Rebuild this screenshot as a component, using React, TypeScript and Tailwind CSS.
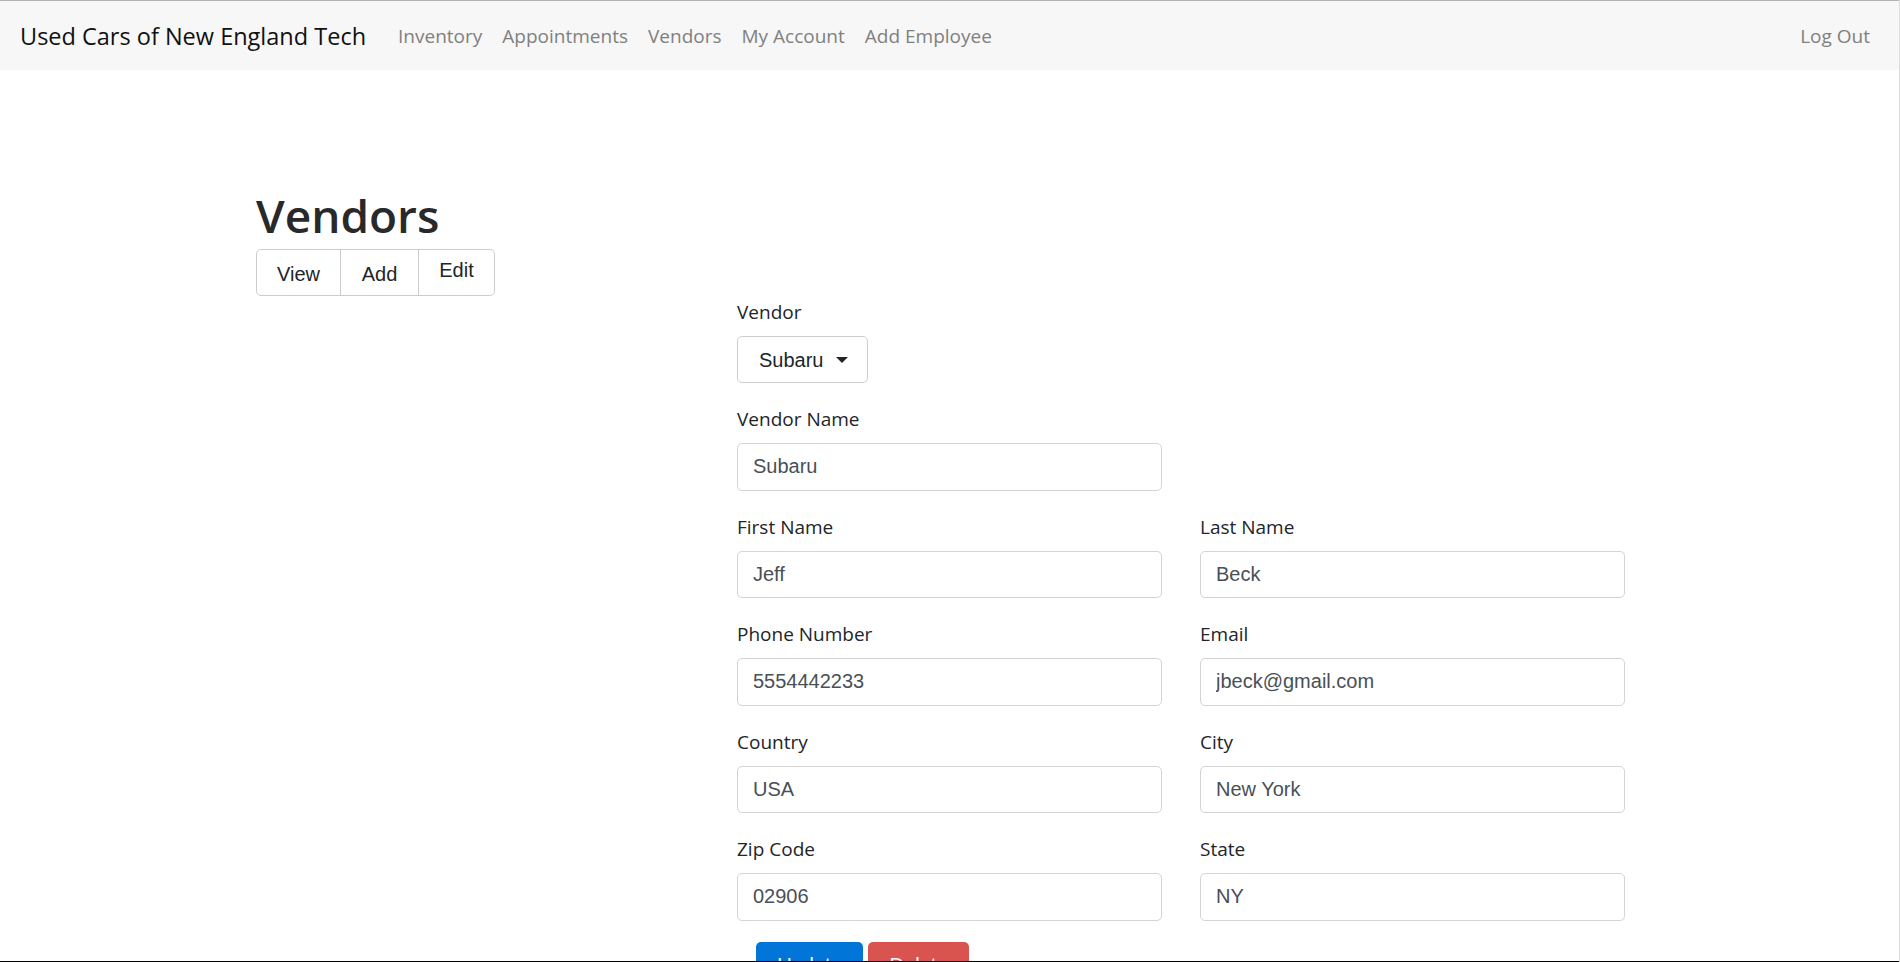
import React from "react"

const navLinks = ["Inventory", "Appointments", "Vendors", "My Account", "Add Employee"]

const fields: [string, string][] = [
  ["First Name", "Jeff"],
  ["Last Name", "Beck"],
  ["Phone Number", "5554442233"],
  ["Email", "jbeck@gmail.com"],
  ["Country", "USA"],
  ["City", "New York"],
  ["Zip Code", "02906"],
  ["State", "NY"],
]

const uiFont = { fontFamily: '"Open Sans", "Noto Sans", sans-serif' }
const arial = { fontFamily: '"Liberation Sans", Arial, sans-serif' }

function Field({ label, value }: { label: string; value: string }) {
  return (
    <div className="mb-[20px]">
      <label className="block text-[19px] leading-[30px] pt-[1px] h-[30px] text-[#212529] mb-[10px]" style={uiFont}>
        {label}
      </label>
      <input
        readOnly
        value={value}
        className="block w-full h-[47.5px] px-[15px] text-[20px] text-[#495057] border border-[#d4d4d4] rounded-[5px] bg-white outline-none"
        style={arial}
      />
    </div>
  )
}

export default function App() {
  return (
    <div className="min-h-screen bg-white border-t border-[#b4b4b4]">
      {/* Navbar */}
      <nav className="h-[69px] bg-[#f7f7f7] flex items-center px-[20px]" style={uiFont}>
        <span className="text-[23.5px] text-[#111] mr-[22px] whitespace-nowrap pt-[2px]">Used Cars of New England Tech</span>
        <div className="flex items-center pt-[2px]">
          {navLinks.map((l) => (
            <a key={l} className="px-[10px] text-[19px] text-[#808080] whitespace-nowrap">
              {l}
            </a>
          ))}
        </div>
        <a className="ml-auto px-[10px] text-[19px] text-[#808080] pt-[2px]">Log Out</a>
      </nav>

      <div className="w-[1388px] mx-auto pt-[109px]">
        <h1 className="text-[46px] leading-[60px] font-semibold text-[#292929] mb-[10px] pt-[6px] h-[60px]" style={uiFont}>
          Vendors
        </h1>

        <div className="flex w-fit h-[47px] border border-[#cccccc] rounded-[5px] text-[20px] text-[#212529]" style={arial}>
          <button className="w-[83px] flex items-center justify-center pt-[2px]">View</button>
          <button className="w-[78px] flex items-center justify-center pt-[2px] border-l border-[#cccccc]">Add</button>
          <button className="w-[76px] flex items-center justify-center pb-[6px] border-l border-[#cccccc]">Edit</button>
        </div>

        {/* Form */}
        <div className="ml-[481px] w-[888px]">
          <div className="mb-[20px]">
            <label className="block text-[19px] leading-[30px] pt-[1px] h-[30px] text-[#212529] mb-[10px]" style={uiFont}>
              Vendor
            </label>
            <button
              className="h-[47px] w-[131px] flex items-center pl-[21px] border border-[#cccccc] rounded-[5px] text-[20px] text-[#212529]"
              style={arial}
            >
              Subaru
              <span className="ml-[12px] w-0 h-0 border-l-[6px] border-r-[6px] border-t-[6px] border-l-transparent border-r-transparent border-t-[#212529]" />
            </button>
          </div>

          <div className="w-[425px]">
            <Field label="Vendor Name" value="Subaru" />
          </div>

          <div className="grid grid-cols-2 gap-x-[38px]">
            {fields.map(([label, value]) => (
              <Field key={label} label={label} value={value} />
            ))}
          </div>

          <div className="flex gap-[5px] pl-[19px] mt-[1px]">
            <button className="h-[47px] w-[107px] rounded-[5px] bg-[#0275d8] text-white text-[20px]" style={arial}>
              Update
            </button>
            <button className="h-[47px] w-[101px] rounded-[5px] bg-[#d9534f] text-white text-[20px]" style={arial}>
              Delete
            </button>
          </div>
        </div>
      </div>

      {/* window frame edges */}
      <div className="fixed left-0 right-0 bottom-0 h-px bg-black" />
      <div className="fixed top-0 bottom-0 right-0 w-px bg-[#dcdcdc]" />
    </div>
  )
}
